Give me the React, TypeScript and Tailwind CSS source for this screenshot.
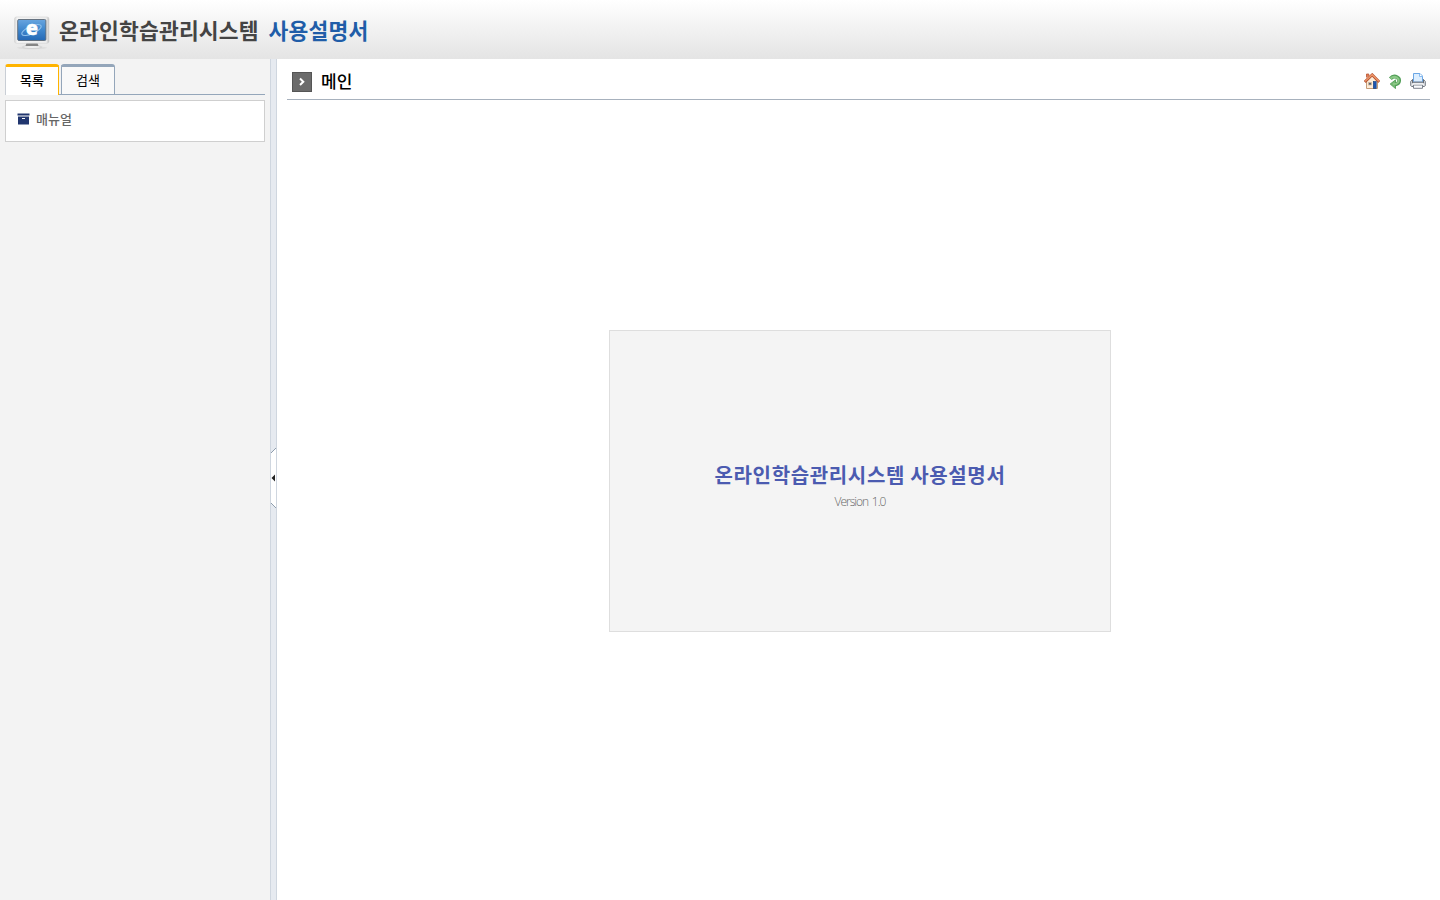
import React from "react";

function MonitorLogo() {
  return (
    <svg width="40" height="36" viewBox="0 0 40 36" className="shrink-0">
      <defs>
        <linearGradient id="screen" x1="0" y1="0" x2="0" y2="1">
          <stop offset="0" stopColor="#68a5df" />
          <stop offset="0.5" stopColor="#3f87cd" />
          <stop offset="1" stopColor="#2468b5" />
        </linearGradient>
        <linearGradient id="frame" x1="0" y1="0" x2="1" y2="0">
          <stop offset="0" stopColor="#d4d4d4" />
          <stop offset="0.08" stopColor="#f5f5f5" />
          <stop offset="0.92" stopColor="#ededed" />
          <stop offset="1" stopColor="#bdbdbd" />
        </linearGradient>
      </defs>
      <ellipse cx="20" cy="32.8" rx="15" ry="1.6" fill="#dedede" />
      <ellipse cx="20" cy="32" rx="9.5" ry="1.4" fill="#f2f2f2" stroke="#bbb" strokeWidth="0.5" />
      <path d="M14.5 28h11l1 3h-13z" fill="#858585" />
      <rect x="2.5" y="2" width="34.5" height="26.3" rx="2" fill="url(#frame)" stroke="#d3d3d3" strokeWidth="0.6" />
      <rect x="5.7" y="4.5" width="28.2" height="21" rx="1.3" fill="url(#screen)" stroke="#5e6975" strokeWidth="0.9" />
      <ellipse cx="19.5" cy="15" rx="10.5" ry="3.8" fill="none" stroke="#91c2ec" strokeWidth="1" transform="rotate(-24 19.5 15)" />
      <text x="20" y="20" textAnchor="middle" fontFamily="Open Sans, sans-serif" fontWeight="800" fontSize="20" fill="#fff" stroke="#fff" strokeWidth="0.3">e</text>
    </svg>
  );
}

function HomeIcon() {
  return (
    <svg width="16" height="16" viewBox="0 0 16 16">
      <path d="M2.5 8 8 3l5.5 5v7.5h-11z" fill="#fdecd8" stroke="#c59c78" />
      <path d="M2.5 4.5V1h2.3v2.3" fill="#e47b4f" stroke="#b85534" strokeWidth="0.8" />
      <path d="M.8 9 8.2 1.8l7 7.2" fill="none" stroke="#b75736" strokeWidth="2.8" />
      <path d="M1 8.4 8.2 1.7l6.8 6.7" fill="none" stroke="#f29a6c" strokeWidth="1.2" />
      <rect x="4.5" y="9.5" width="3" height="2.5" fill="#53647a" stroke="#d5b898" strokeWidth="0.7" />
      <rect x="9.3" y="8.5" width="2.9" height="7" fill="#1b56b4" stroke="#163c77" strokeWidth="0.6" />
    </svg>
  );
}

function ReturnIcon() {
  return (
    <svg width="14" height="16" viewBox="0 0 14 16">
      <path d="M2.4 5.7C4.2 3.5 6.8 3 9 4.2c3.1 1.6 2.8 6-.8 6.9l-1.8.2" fill="none" stroke="#529f58" strokeWidth="3.8" />
      <path d="m2.2 11 5.3-4.1v8.7z" fill="#75b973" stroke="#529f58" strokeWidth="0.9" />
      <path d="M2.5 5.5C4.5 3.7 6.8 3.4 9 4.7c2.5 1.5 2.2 5.2-.7 6L5 11" fill="none" stroke="#8bc886" strokeWidth="2.1" />
    </svg>
  );
}

function PrinterIcon() {
  return (
    <svg width="16" height="16" viewBox="0 0 16 16">
      <path d="M3.5 9V.5H10L12.5 3v6z" fill="#dceeff" stroke="#6ba6e5" />
      <path d="M9.5.8v2.7h3" fill="#fff" stroke="#8abcf0" />
      <path d="M2.5 6.5.7 8.5v4.2l1 .8h12.6l1-.8V8.5l-1.8-2v3h-11z" fill="#e0e2e5" stroke="#747a82" />
      <path d="M2.5 6.5v4m11-4v4" stroke="#666c75" />
      <path d="M3 9h10" stroke="#909aa6" />
      <path d="M3.5 12h9v3.3h-9z" fill="#fafbfd" stroke="#7d838d" />
      <path d="M2 11h12" stroke="#fff" />
    </svg>
  );
}

export default function App() {
  return (
    <div className="flex h-screen flex-col overflow-hidden bg-white font-['Noto_Sans_CJK_KR',sans-serif]">
      <header className="flex h-[59px] shrink-0 items-start bg-linear-to-b from-white to-[#e4e4e4] pl-3">
        <div className="pt-[15px]"><MonitorLogo /></div>
        <h1 className="flex whitespace-nowrap pt-[14px] pl-[7px] text-[21.5px] leading-[32px] font-bold tracking-[0.2px] text-[#444]">
          <span className="w-[209.5px]">온라인학습관리시스템</span>
          <span className="text-[#205da8]">사용설명서</span>
        </h1>
      </header>
      <div className="flex min-h-0 flex-1">
        <aside className="w-[270px] shrink-0 bg-[#f3f3f3] px-[5px] pt-[5px]">
          <nav className="flex h-[31px] items-start gap-[2px] border-b border-[#94a6ba] text-[13px] leading-[26px] text-black">
            <button className="flex h-[31px] w-[54px] justify-center rounded-t-[3px] border-x border-t-[3px] border-x-[#ffb400] border-t-[#ffb400] border-l-[#c9ced5] bg-white font-medium">목록</button>
            <button className="flex h-[30px] w-[54px] justify-center rounded-t-[3px] border-x border-t-[3px] border-[#94a6ba] bg-[#f9f9f9]">검색</button>
          </nav>
          <div className="mt-[5px] flex h-[42px] items-center gap-[6px] border border-[#cfcfcf] bg-white pb-[4px] pl-[11px] text-[13px] text-[#666]">
            <svg width="13" height="12" viewBox="0 0 13 12" className="shrink-0">
              <path d="M.5.5h12v2H.5zM1 3.5h11V11.5H1z" fill="#21366f" />
              <path d="M5 5.5h3" stroke="#fff" />
            </svg>
            <span className="font-medium">매뉴얼</span>
          </div>
        </aside>
        <div className="flex w-[7px] shrink-0 flex-col border-x border-[#cfd6df] bg-[#e6eaf0] pt-[388px]">
          <svg width="5" height="62" viewBox="0 0 5 62">
            <path d="M0 6 5 1v60l-5-5z" fill="#fff" />
            <path d="m0 6 5-5M0 56l5 5" stroke="#8f9eae" />
            <path d="M.5 31 4 27.5v7z" fill="#222" />
          </svg>
        </div>
        <main className="flex min-w-0 flex-1 flex-col px-[10px]">
          <div className="flex h-[41px] shrink-0 items-start border-b border-[#a7b1bd] pl-[5px]">
            <svg width="20" height="20" viewBox="0 0 20 20" className="mt-[13px] shrink-0">
              <rect x=".5" y=".5" width="19" height="19" fill="#6b6b6b" stroke="#555" />
              <path d="m8 6.5 3.3 3.2L8 13" fill="none" stroke="#fff" strokeWidth="2" />
            </svg>
            <h2 className="ml-[9px] pt-[9px] text-[17px] leading-[25px] font-medium text-black">메인</h2>
            <div className="mr-[4px] ml-auto flex gap-[8px] pt-[14px]">
              <HomeIcon />
              <ReturnIcon />
              <PrinterIcon />
            </div>
          </div>
          <section className="mt-[230px] ml-[322px] flex h-[302px] w-[502px] flex-col items-center border border-[#dedede] bg-[#f4f4f4] pt-[129px]">
            <h3 className="text-[20px] leading-[30px] font-bold tracking-[0.65px] whitespace-nowrap text-[#4b5bb0]">온라인학습관리시스템 사용설명서</h3>
            <p className="mt-[3px] font-['Open_Sans',sans-serif] text-[12px] leading-[18px] font-light tracking-[-1px] [word-spacing:1.5px] text-[#666]">Version 1.0</p>
          </section>
        </main>
      </div>
    </div>
  );
}
